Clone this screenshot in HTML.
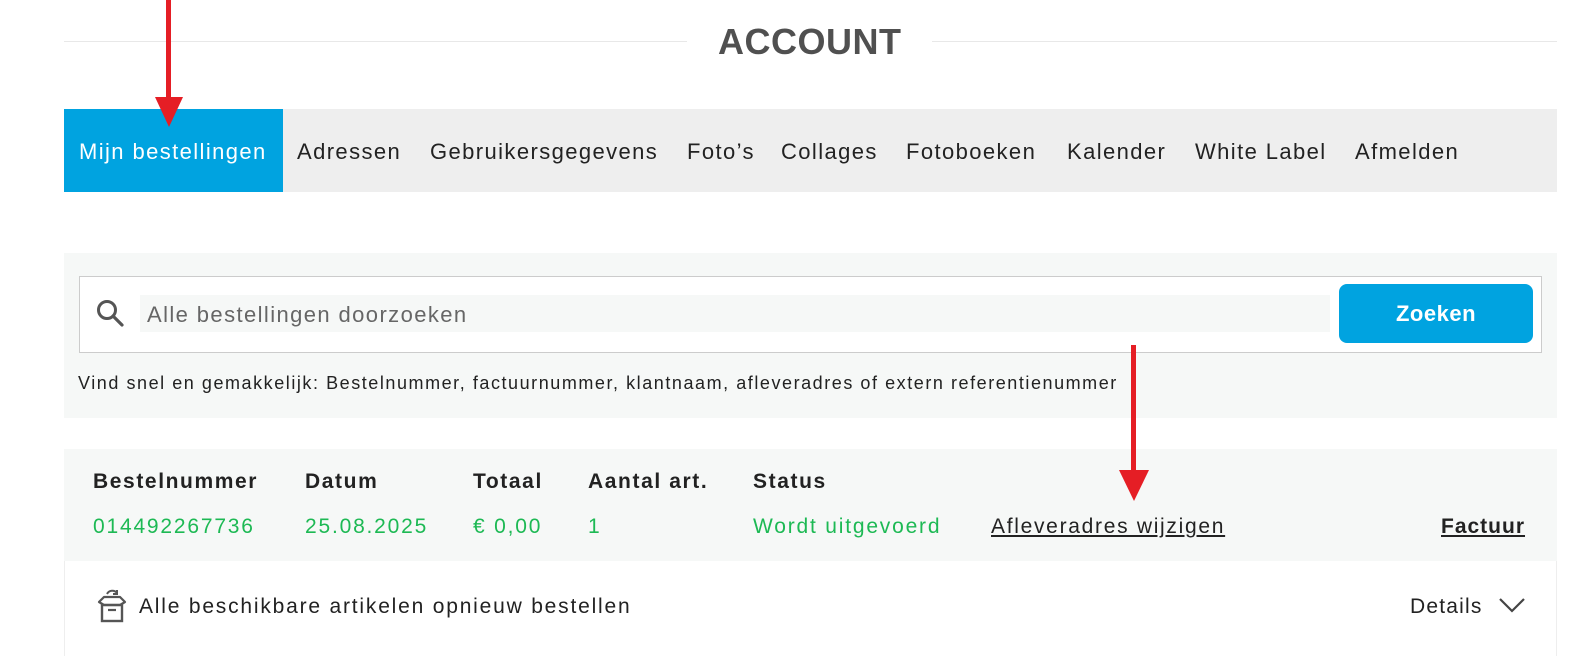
<!DOCTYPE html>
<html><head><meta charset="utf-8"><style>
*{margin:0;padding:0;box-sizing:border-box}
body{width:1575px;height:656px;background:#fff;font-family:"Liberation Sans",sans-serif;position:relative;overflow:hidden;color:#222}
.a{position:absolute;white-space:nowrap}
.nav{font-size:22px;color:#222;top:139px;letter-spacing:1.4px}
.h{font-size:21px;font-weight:bold;top:470px;color:#222;letter-spacing:1.6px}
.v{font-size:21px;color:#1db954;top:515px;letter-spacing:1.8px}
</style></head><body>
<div class="a" style="left:64px;top:41px;width:623px;height:1px;background:#e8e8e8"></div>
<div class="a" style="left:932px;top:41px;width:625px;height:1px;background:#e8e8e8"></div>
<div class="a" style="left:718px;top:21px;font-size:36px;font-weight:bold;color:#505050;letter-spacing:0.5px">ACCOUNT</div>

<div class="a" style="left:64px;top:109px;width:1493px;height:83px;background:#eeeeee"></div>
<div class="a" style="left:64px;top:109px;width:219px;height:83px;background:#00a3e0"></div>
<div class="a nav" style="left:79px;color:#fff">Mijn bestellingen</div>
<div class="a nav" style="left:297px">Adressen</div>
<div class="a nav" style="left:430px">Gebruikersgegevens</div>
<div class="a nav" style="left:687px">Foto’s</div>
<div class="a nav" style="left:781px">Collages</div>
<div class="a nav" style="left:906px">Fotoboeken</div>
<div class="a nav" style="left:1067px">Kalender</div>
<div class="a nav" style="left:1195px">White Label</div>
<div class="a nav" style="left:1355px">Afmelden</div>

<div class="a" style="left:64px;top:253px;width:1493px;height:165px;background:#f6f8f7"></div>
<div class="a" style="left:79px;top:276px;width:1463px;height:77px;background:#fff;border:1px solid #ccc"></div>
<svg class="a" style="left:94px;top:297px" width="32" height="32" viewBox="0 0 32 32"><circle cx="13" cy="13" r="8.5" fill="none" stroke="#555" stroke-width="3"/><line x1="19" y1="19" x2="28" y2="28" stroke="#555" stroke-width="3.2" stroke-linecap="round"/></svg>
<div class="a" style="left:140px;top:295px;width:1190px;height:37px;background:#f6f8f7"></div>
<div class="a" style="left:147px;top:302px;font-size:22px;color:#666;letter-spacing:1.4px">Alle bestellingen doorzoeken</div>
<div class="a" style="left:1339px;top:284px;width:194px;height:59px;background:#00a3e0;border-radius:8px;color:#fff;font-weight:bold;font-size:22px;text-align:center;line-height:59px;letter-spacing:0.5px">Zoeken</div>
<div class="a" style="left:78px;top:373px;font-size:18px;color:#222;letter-spacing:1.55px">Vind snel en gemakkelijk: Bestelnummer, factuurnummer, klantnaam, afleveradres of extern referentienummer</div>

<div class="a" style="left:64px;top:449px;width:1493px;height:112px;background:#f6f8f7"></div>
<div class="a h" style="left:93px">Bestelnummer</div>
<div class="a h" style="left:305px">Datum</div>
<div class="a h" style="left:473px">Totaal</div>
<div class="a h" style="left:588px">Aantal art.</div>
<div class="a h" style="left:753px">Status</div>
<div class="a v" style="left:93px">014492267736</div>
<div class="a v" style="left:305px">25.08.2025</div>
<div class="a v" style="left:473px">€ 0,00</div>
<div class="a v" style="left:588px">1</div>
<div class="a v" style="left:753px">Wordt uitgevoerd</div>
<div class="a" style="left:991px;top:515px;font-size:21px;color:#222;text-decoration:underline;letter-spacing:1.7px">Afleveradres wijzigen</div>
<div class="a" style="left:1441px;top:515px;font-size:21px;font-weight:bold;color:#222;text-decoration:underline;letter-spacing:1px">Factuur</div>

<div class="a" style="left:64px;top:561px;width:1px;height:95px;background:#eee"></div>
<div class="a" style="left:1556px;top:561px;width:1px;height:95px;background:#eee"></div>
<svg class="a" style="left:96px;top:588px" width="32" height="36" viewBox="0 0 32 36"><path d="M11 6a6 6 0 0 1 10-1" fill="none" stroke="#555" stroke-width="2"/><path d="M21 2v4h-4" fill="none" stroke="#555" stroke-width="2"/><path d="M3 14l5-5h16l5 5-5 3H8z" fill="none" stroke="#555" stroke-width="2.2" stroke-linejoin="round"/><rect x="6" y="17" width="20" height="16" fill="none" stroke="#555" stroke-width="2.4"/><line x1="12" y1="22" x2="20" y2="22" stroke="#555" stroke-width="2.2"/></svg>
<div class="a" style="left:139px;top:595px;font-size:21px;color:#222;letter-spacing:1.8px">Alle beschikbare artikelen opnieuw bestellen</div>
<div class="a" style="left:1410px;top:595px;font-size:21px;color:#222;letter-spacing:1.2px">Details</div>
<svg class="a" style="left:1498px;top:596px" width="28" height="18" viewBox="0 0 28 18"><path d="M2 3l12 12L26 3" fill="none" stroke="#444" stroke-width="2.2"/></svg>

<div class="a" style="left:166px;top:0;width:5px;height:100px;background:#e51e25"></div>
<div class="a" style="left:155px;top:97px;width:0;height:0;border-left:14px solid transparent;border-right:14px solid transparent;border-top:30px solid #e51e25"></div>
<div class="a" style="left:1131px;top:345px;width:5px;height:128px;background:#e51e25"></div>
<div class="a" style="left:1119px;top:470px;width:0;height:0;border-left:15px solid transparent;border-right:15px solid transparent;border-top:31px solid #e51e25"></div>
</body></html>
